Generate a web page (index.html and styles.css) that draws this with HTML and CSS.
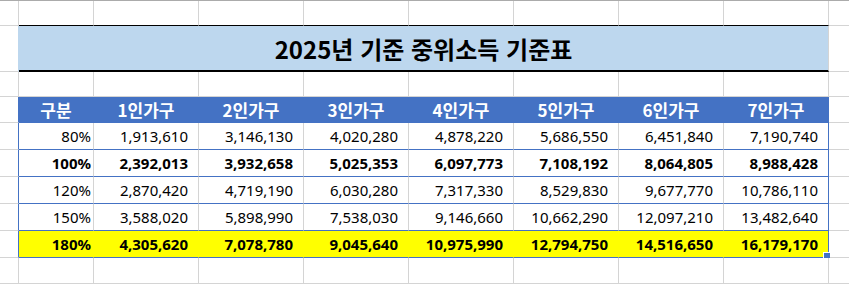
FILE: index.html
```html
<!DOCTYPE html>
<html lang="ko">
<head>
<meta charset="utf-8">
<title>2025년 기준 중위소득 기준표</title>
<link rel="stylesheet" href="styles.css">
</head>
<body>
<div class="sheet">
  <div class="topline"></div>

  <div class="row r-blank r-before-title">
    <div class="c a"></div><div class="c"></div><div class="c"></div><div class="c"></div><div class="c"></div><div class="c"></div><div class="c"></div><div class="c"></div><div class="c"></div><div class="c j"></div>
  </div>

  <div class="row r-title">
    <div class="c a"></div>
    <div class="c title">2025년 기준 중위소득 기준표</div>
    <div class="c j"></div>
  </div>

  <div class="row r-blank">
    <div class="c a"></div><div class="c"></div><div class="c"></div><div class="c"></div><div class="c"></div><div class="c"></div><div class="c"></div><div class="c"></div><div class="c"></div><div class="c j"></div>
  </div>

  <div class="row r-head">
    <div class="c a edge"></div>
    <div class="c h">구분</div>
    <div class="c h">1인가구</div>
    <div class="c h">2인가구</div>
    <div class="c h">3인가구</div>
    <div class="c h">4인가구</div>
    <div class="c h">5인가구</div>
    <div class="c h">6인가구</div>
    <div class="c h last">7인가구</div>
    <div class="c j"></div>
  </div>

  <div class="row r-data">
    <div class="c a edge"></div>
    <div class="c d pct">80%</div>
    <div class="c d">1,913,610</div>
    <div class="c d">3,146,130</div>
    <div class="c d">4,020,280</div>
    <div class="c d">4,878,220</div>
    <div class="c d">5,686,550</div>
    <div class="c d">6,451,840</div>
    <div class="c d last">7,190,740</div>
    <div class="c j"></div>
  </div>

  <div class="row r-data bold">
    <div class="c a edge"></div>
    <div class="c d pct">100%</div>
    <div class="c d">2,392,013</div>
    <div class="c d">3,932,658</div>
    <div class="c d">5,025,353</div>
    <div class="c d">6,097,773</div>
    <div class="c d">7,108,192</div>
    <div class="c d">8,064,805</div>
    <div class="c d last">8,988,428</div>
    <div class="c j"></div>
  </div>

  <div class="row r-data">
    <div class="c a edge"></div>
    <div class="c d pct">120%</div>
    <div class="c d">2,870,420</div>
    <div class="c d">4,719,190</div>
    <div class="c d">6,030,280</div>
    <div class="c d">7,317,330</div>
    <div class="c d">8,529,830</div>
    <div class="c d">9,677,770</div>
    <div class="c d last">10,786,110</div>
    <div class="c j"></div>
  </div>

  <div class="row r-data">
    <div class="c a edge"></div>
    <div class="c d pct">150%</div>
    <div class="c d">3,588,020</div>
    <div class="c d">5,898,990</div>
    <div class="c d">7,538,030</div>
    <div class="c d">9,146,660</div>
    <div class="c d">10,662,290</div>
    <div class="c d">12,097,210</div>
    <div class="c d last">13,482,640</div>
    <div class="c j"></div>
  </div>

  <div class="row r-data bold yellow">
    <div class="c a edge"></div>
    <div class="c d pct">180%</div>
    <div class="c d">4,305,620</div>
    <div class="c d">7,078,780</div>
    <div class="c d">9,045,640</div>
    <div class="c d">10,975,990</div>
    <div class="c d">12,794,750</div>
    <div class="c d">14,516,650</div>
    <div class="c d last sel">16,179,170<span class="handle"></span></div>
    <div class="c j"></div>
  </div>

  <div class="row r-blank r-after">
    <div class="c a"></div><div class="c"></div><div class="c"></div><div class="c"></div><div class="c"></div><div class="c"></div><div class="c"></div><div class="c"></div><div class="c"></div><div class="c j"></div>
  </div>
</div>
</body>
</html>
```

FILE: styles.css
```css
* { box-sizing: border-box; }

html, body {
  margin: 0;
  padding: 0;
  background: #ffffff;
}

body {
  font-family: "Noto Sans", "Noto Sans CJK KR", sans-serif;
  color: #000000;
  overflow: hidden;
  width: 849px;
  height: 285px;
}

.sheet {
  display: flex;
  flex-direction: column;
}

.topline {
  height: 1px;
  background: #ababab;
}

.row {
  display: grid;
  grid-template-columns: 19px 75px repeat(7, 105px) 1fr;
}

.c {
  border-right: 1px solid #d4d4d4;
  border-bottom: 1px solid #d4d4d4;
}

.j { border-right: none; }

/* blank rows */
.r-blank { height: 25px; }
.r-after { height: 26px; }
.r-before-title .c:not(.a):not(.j) { border-bottom-color: #000000; }

/* title row */
.r-title { height: 46px; }
.r-title .a { border-right-color: #bdd7ee; }
.title {
  grid-column: 2 / 10;
  background: #bdd7ee;
  border-bottom: 2px solid #000000;
  display: flex;
  align-items: center;
  justify-content: center;
  font-family: "Noto Sans CJK KR", sans-serif;
  font-weight: 700;
  font-size: 24px;
  padding-top: 1px;
}

/* header */
.r-head { height: 26px; }
.edge { border-right-color: #4472c4; }
.h {
  background: #4472c4;
  border-right-color: #4472c4;
  border-bottom-color: #4472c4;
  color: #ffffff;
  font-family: "Noto Sans CJK KR", sans-serif;
  font-weight: 700;
  font-size: 17px;
  display: flex;
  align-items: center;
  justify-content: center;
  line-height: 1;
}

/* data rows */
.r-data { height: 27px; }
.d {
  border-bottom-color: #4472c4;
  display: flex;
  align-items: center;
  justify-content: flex-end;
  padding-right: 10px;
  font-size: 15px;
  line-height: 1;
  padding-top: 1px;
}
.d.pct { padding-right: 2px; }
.d.last { border-right-color: #4472c4; }
.bold .d { font-weight: 700; }

.yellow .d { background: #ffff00; border-right-color: #ffff00; }
.yellow .d.last { border-right-color: #4472c4; }

.sel { position: relative; }
.handle {
  position: absolute;
  right: -2px;
  bottom: -1px;
  width: 7px;
  height: 6px;
  background: #4472c4;
  border-top: 1px solid #ffffff;
  border-left: 1px solid #ffffff;
}
```
